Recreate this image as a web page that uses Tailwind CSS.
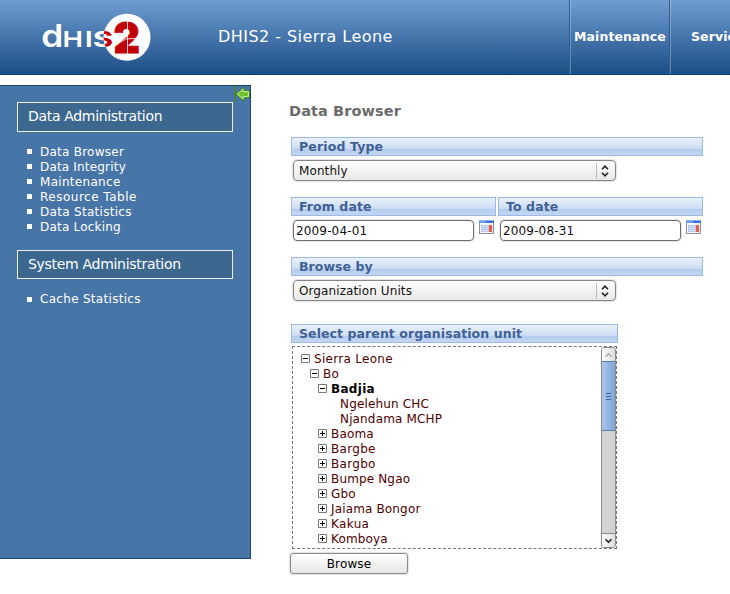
<!DOCTYPE html>
<html lang="en">
<head>
<meta charset="utf-8">
<title>DHIS2 - Data Browser</title>
<script src="https://cdn.jsdelivr.net/npm/@tailwindcss/browser@4"></script>
</head>
<body class="w-[730px] h-[594px] overflow-hidden bg-white font-['DejaVu_Sans',sans-serif] text-[12px] leading-[15px] whitespace-nowrap">
<svg class="hidden">
  <defs>
    <symbol id="minus" viewBox="0 0 9 9"><path d="M.5 .5h8v8h-8z" fill="#fff" stroke="#7b7b7b"/><path d="M2 4.5h5" stroke="#000"/></symbol>
    <symbol id="plus" viewBox="0 0 9 9"><path d="M.5 .5h8v8h-8z" fill="#fff" stroke="#7b7b7b"/><path d="M2 4.5h5M4.5 2v5" stroke="#000"/></symbol>
    <symbol id="updown" viewBox="0 0 8 12"><path d="M1 4.2L4 1.2l3 3M1 7.8l3 3 3-3" fill="none" stroke="#222" stroke-width="1.6"/></symbol>
    <symbol id="calendar" viewBox="0 0 15 14"><path d="M0 0h15v14H0z" fill="#8a8f99"/><path d="M1 3h13v10H1z" fill="#f7f8fb"/><path d="M0 0h8v3H0z" fill="#6f9ff0"/><path d="M7 0h8v3H7z" fill="#3a70dc"/><path d="M0 0h15v1H0z" fill="#8fb0e6"/><path d="M2 5h8v7H2z" fill="#a8c1ec"/><path d="M10 5h3v7h-3z" fill="#f0593d"/><path d="M2 6.5h8M2 8.5h8M2 10.5h8M4 5v7M6 5v7M8 5v7" stroke="#fff" stroke-width=".5" opacity=".75"/></symbol>
  </defs>
</svg>

<header class="flex h-[75px] overflow-hidden border-b border-[#073e78] bg-linear-to-b from-[#6f9dd1] to-[#1b4e86] text-white">
  <div class="w-[218px] shrink-0 pl-[40px] pt-[12px]">
    <svg width="112" height="50" viewBox="40 12 112 50" role="img" aria-label="DHIS2">
      <defs><clipPath id="disc"><circle cx="127" cy="37.3" r="23.5"/></clipPath></defs>
      <circle cx="127" cy="37.3" r="23.5" fill="#fff"/>
      <g font-family="Inter, sans-serif" font-weight="700">
        <text transform="translate(41.3 47.3) scale(1.12 1)" font-size="31.5" font-weight="600" fill="#fff">d</text>
        <text transform="translate(62.5 47.3) scale(1.25 1)" font-size="22" font-weight="600" fill="#fff">H</text>
        <text transform="translate(85.3 47.3) scale(1.15 1)" font-size="22" font-weight="700" fill="#fff">I</text>
        <text transform="translate(92.7 47.3) scale(1.42 1)" font-size="22" font-weight="700" fill="#fff">S</text>
        <g clip-path="url(#disc)"><text transform="translate(92.7 47.3) scale(1.42 1)" font-size="22" font-weight="700" fill="#c20008">S</text></g>
        <text transform="translate(113.4 52.8) scale(.95 1)" font-size="43" font-weight="900" fill="#c20008" stroke="#c20008" stroke-width=".9">2</text>
      </g>
      <path d="M127.5 20v34M114 33.5l8-.2M115 45.5l11-6.5 14-1" fill="none" stroke="#fff" stroke-width=".8"/>
    </svg>
  </div>
  <h1 class="w-[351px] shrink-0 text-[16px] leading-[20px] pt-[27px] tracking-[0.45px]">DHIS2 - Sierra Leone</h1>
  <nav class="flex shrink-0 font-bold text-[12.5px] tracking-[0.1px]">
    <a class="w-[100px] border-l border-[#2c5d92] shadow-[inset_1px_0_#ffffff45] pl-[4px] pt-[29px]">Maintenance</a>
    <a class="w-[120px] border-l border-[#2c5d92] shadow-[inset_1px_0_#ffffff45] pl-[21px] pt-[29px]">Services</a>
  </nav>
</header>

<div class="flex pt-[10px]">
  <aside class="relative w-[251px] h-[474px] shrink-0 border border-l-0 border-[#1b456d] bg-[#4775a7] text-white pl-[17px] pt-[16px] text-[12px] tracking-[0.2px]">
    <svg class="absolute left-[234px] top-0" width="16" height="17" viewBox="0 0 16 17"><path d="M.8 0v16" stroke="#4c8a1c" stroke-width="1.6"/><path d="M1.8 8.2L10 1v3.6h5.4v7H10v3.6z" fill="#6fbd2b" stroke="#3f8418" stroke-width="1"/><path d="M3.4 8.2L9 3.2v2.4h5.4v5H9v2.4z" fill="none" stroke="#c7eea2" stroke-width="1"/></svg>
    <h2 class="w-[216px] h-[30px] border border-[#eee] bg-[#3c6890] pl-[10px] leading-[27px] text-[14px] tracking-[-0.32px]">Data Administration</h2>
    <ul class="pt-[13px] pl-[10px]">
      <li class="flex items-center gap-[8px]"><i class="size-[5px] -mt-[2px] bg-white"></i><span class="tracking-[0.25px]">Data Browser</span></li>
      <li class="flex items-center gap-[8px]"><i class="size-[5px] -mt-[2px] bg-white"></i><span class="tracking-[0.18px]">Data Integrity</span></li>
      <li class="flex items-center gap-[8px]"><i class="size-[5px] -mt-[2px] bg-white"></i><span class="tracking-[0.3px]">Maintenance</span></li>
      <li class="flex items-center gap-[8px]"><i class="size-[5px] -mt-[2px] bg-white"></i><span class="tracking-[0.5px]">Resource Table</span></li>
      <li class="flex items-center gap-[8px]"><i class="size-[5px] -mt-[2px] bg-white"></i><span class="tracking-[0.3px]">Data Statistics</span></li>
      <li class="flex items-center gap-[8px]"><i class="size-[5px] -mt-[2px] bg-white"></i>Data Locking</li>
    </ul>
    <h2 class="mt-[15px] w-[216px] h-[29px] border border-[#eee] bg-[#3c6890] pl-[10px] leading-[27px] text-[14px] tracking-[-0.3px]">System Administration</h2>
    <ul class="pt-[13px] pl-[10px]">
      <li class="flex items-center gap-[8px]"><i class="size-[5px] bg-white"></i><span class="tracking-[0.3px]">Cache Statistics</span></li>
    </ul>
  </aside>

  <main class="pl-[38px] pt-[16px] w-[479px]">
    <h2 class="text-[14.5px] leading-[20px] font-bold text-[#6b6b6b] tracking-[0.1px]">Data Browser</h2>
    <div class="ml-[2px] mt-[16px] w-[412px] h-[19px] border border-[#9bb9e7] bg-[linear-gradient(#e9f1fa_0,#cadcf2_11px,#b3cbee_11px,#c5d7f1_100%)] pl-[7px] leading-[17px] font-bold text-[12.5px] tracking-[0.15px] text-[#3f6097]">Period Type</div>
    <div class="ml-[4px] mt-[4px] w-[323px] h-[21px] flex items-center rounded-[4px] border border-[#868686] shadow-[0_0_1px_1px_#e2e2e2] bg-linear-to-b from-white to-[#e9e8e6] pl-[5px] text-[#111]">
      <span class="flex-1 pt-[2px] tracking-[0.1px]">Monthly</span><span class="flex h-[16px] w-[19px] items-center justify-center border-l border-[#bbb] pr-[2px]"><svg width="8" height="12"><use href="#updown"/></svg></span>
    </div>
    <div class="ml-[2px] mt-[16px] flex gap-[2px] font-bold text-[12.5px] tracking-[0.1px] text-[#3f6097]">
      <div class="w-[205px] h-[19px] border border-[#9bb9e7] bg-[linear-gradient(#e9f1fa_0,#cadcf2_11px,#b3cbee_11px,#c5d7f1_100%)] pl-[7px] leading-[17px]">From date</div>
      <div class="w-[205px] h-[19px] border border-[#9bb9e7] bg-[linear-gradient(#e9f1fa_0,#cadcf2_11px,#b3cbee_11px,#c5d7f1_100%)] pl-[7px] leading-[17px]">To date</div>
    </div>
    <div class="ml-[4px] mt-[4px] flex text-[#111]">
      <div class="w-[181px] h-[21px] rounded-[4px] border border-[#6e6e6e] shadow-[0_0_1px_1px_#e5e5e5] pl-[2px] leading-[21px] tracking-[0.15px]">2009-04-01</div>
      <svg class="ml-[5px]" width="15" height="14"><use href="#calendar"/></svg>
      <div class="ml-[6px] w-[181px] h-[21px] rounded-[4px] border border-[#6e6e6e] shadow-[0_0_1px_1px_#e5e5e5] pl-[2px] leading-[21px] tracking-[0.15px]">2009-08-31</div>
      <svg class="ml-[5px]" width="15" height="14"><use href="#calendar"/></svg>
    </div>
    <div class="ml-[2px] mt-[16px] w-[412px] h-[19px] border border-[#9bb9e7] bg-[linear-gradient(#e9f1fa_0,#cadcf2_11px,#b3cbee_11px,#c5d7f1_100%)] pl-[7px] leading-[17px] font-bold text-[12.5px] tracking-[0.05px] text-[#3f6097]">Browse by</div>
    <div class="ml-[4px] mt-[4px] w-[323px] h-[21px] flex items-center rounded-[4px] border border-[#868686] shadow-[0_0_1px_1px_#e2e2e2] bg-linear-to-b from-white to-[#e9e8e6] pl-[5px] text-[#111]">
      <span class="flex-1 pt-[2px] tracking-[0.1px]">Organization Units</span><span class="flex h-[16px] w-[19px] items-center justify-center border-l border-[#bbb] pr-[2px]"><svg width="8" height="12"><use href="#updown"/></svg></span>
    </div>
    <div class="ml-[2px] mt-[23px] w-[327px] h-[19px] border border-[#9bb9e7] bg-[linear-gradient(#e9f1fa_0,#cadcf2_11px,#b3cbee_11px,#c5d7f1_100%)] pl-[7px] leading-[17px] font-bold text-[12.5px] tracking-[0.08px] text-[#3f6097]">Select parent organisation unit</div>

    <div class="ml-[3px] mt-[3px] flex w-[325px] h-[203px] border border-dashed border-[#777] text-[#520000]">
      <ul class="flex-1 pt-[5px] pl-[8px] overflow-hidden tracking-[0.15px]">
        <li class="flex items-center gap-[4px]"><svg class="-mt-[2px]" width="9" height="9"><use href="#minus"/></svg><span class="tracking-[0.3px]">Sierra Leone</span></li>
        <li class="flex items-center gap-[4px] pl-[9px]"><svg class="-mt-[2px]" width="9" height="9"><use href="#minus"/></svg>Bo</li>
        <li class="flex items-center gap-[4px] pl-[17px]"><svg class="-mt-[2px]" width="9" height="9"><use href="#minus"/></svg><b class="text-black tracking-[0.3px]">Badjia</b></li>
        <li class="pl-[39px]">Ngelehun CHC</li>
        <li class="pl-[39px]">Njandama MCHP</li>
        <li class="flex items-center gap-[4px] pl-[17px]"><svg class="-mt-[2px]" width="9" height="9"><use href="#plus"/></svg>Baoma</li>
        <li class="flex items-center gap-[4px] pl-[17px]"><svg class="-mt-[2px]" width="9" height="9"><use href="#plus"/></svg><span class="tracking-[0.3px]">Bargbe</span></li>
        <li class="flex items-center gap-[4px] pl-[17px]"><svg class="-mt-[2px]" width="9" height="9"><use href="#plus"/></svg><span class="tracking-[0.3px]">Bargbo</span></li>
        <li class="flex items-center gap-[4px] pl-[17px]"><svg class="-mt-[2px]" width="9" height="9"><use href="#plus"/></svg>Bumpe Ngao</li>
        <li class="flex items-center gap-[4px] pl-[17px]"><svg class="-mt-[2px]" width="9" height="9"><use href="#plus"/></svg>Gbo</li>
        <li class="flex items-center gap-[4px] pl-[17px]"><svg class="-mt-[2px]" width="9" height="9"><use href="#plus"/></svg>Jaiama Bongor</li>
        <li class="flex items-center gap-[4px] pl-[17px]"><svg class="-mt-[2px]" width="9" height="9"><use href="#plus"/></svg><span class="tracking-[0.35px]">Kakua</span></li>
        <li class="flex items-center gap-[4px] pl-[17px]"><svg class="-mt-[2px]" width="9" height="9"><use href="#plus"/></svg>Komboya</li>
      </ul>
      <div class="flex w-[15px] h-[201px] flex-col rounded-[3px] border border-[#8b8b8b] bg-[#d4d3d1] overflow-hidden">
        <div class="h-[13px] bg-linear-to-r from-white to-[#dedddb] flex items-center justify-center"><svg width="9" height="6"><path d="M1.5 4.8l3-3 3 3" fill="none" stroke="#aaa" stroke-width="1.5"/></svg></div>
        <div class="-mx-px h-[70px] border border-[#567eae] bg-linear-to-r from-[#a9c6ea] to-[#7fa5d9] flex items-center justify-center"><svg width="6" height="8"><path d="M0 1.5h5M0 4.5h5M0 7.5h5" stroke="#3c659a"/></svg></div>
        <div class="mt-auto h-[14px] border-t border-[#8b8b8b] bg-linear-to-r from-white to-[#dedddb] flex items-center justify-center"><svg width="9" height="6"><path d="M1.5 1.2l3 3 3-3" fill="none" stroke="#222" stroke-width="1.6"/></svg></div>
      </div>
    </div>
    <button class="ml-px mt-[4px] block w-[118px] h-[21px] rounded-[3px] border border-[#8b8b8b] shadow-[0_0_1px_1px_#e2e2e2] bg-linear-to-b from-white to-[#e7e6e4] pt-px leading-[19px] tracking-[0.15px] text-black">Browse</button>
  </main>
</div>
</body>
</html>
